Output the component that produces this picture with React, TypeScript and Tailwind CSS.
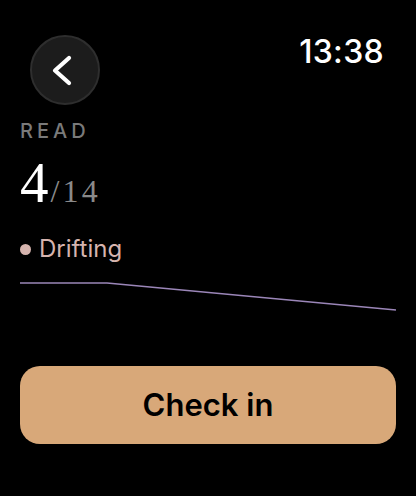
function App() {
  return (
    <div className="w-[416px] h-[496px] bg-black text-white overflow-hidden font-['Inter',sans-serif]">
      {/* top bar */}
      <div className="flex items-start justify-between pt-8 pl-[30px] pr-8">
        <button className="mt-[3px] w-[70px] h-[70px] rounded-full bg-[#1c1c1c] border-2 border-[#2e2e2e] flex items-center justify-center">
          <svg width="70" height="70" viewBox="0 0 70 70" className="shrink-0">
            <polyline
              points="39,23 25,35.5 39,48"
              fill="none"
              stroke="white"
              strokeWidth="4.2"
              strokeLinecap="round"
              strokeLinejoin="round"
            />
          </svg>
        </button>
        <span className="text-[32px] leading-[40px] font-medium tracking-[0.01em]">13:38</span>
      </div>

      <div className="px-5">
        <div className="mt-[14px] text-[20px] leading-6 tracking-[0.2em] text-[#7a7a7a] font-medium">READ</div>

        <div className="mt-[12px] h-[56px] flex items-baseline font-['Liberation_Serif',serif]">
          <span className="text-[57px] leading-[56px] text-white">4</span>
          <span className="ml-[2px] text-[32px] leading-none tracking-[0.1em] text-[#8a8a8a]">/14</span>
        </div>

        <div className="mt-[22px] flex items-center gap-[8px]">
          <span className="w-[11px] h-[11px] rounded-full bg-[#d6b4ae]" />
          <span className="text-[24px] leading-8 text-[#d6b4ae]">Drifting</span>
        </div>

        <svg width="376" height="34" viewBox="0 0 376 34" className="mt-[14px] block">
          <polyline
            points="0,4 87,4 376,31"
            fill="none"
            stroke="#9b86b8"
            strokeWidth="1.6"
            strokeLinejoin="round"
          />
        </svg>

        <button className="mt-[53px] w-full h-[78px] rounded-[20px] bg-[#d8a879] text-black text-[31px] font-semibold">
          Check in
        </button>
      </div>
    </div>
  );
}

export default App;
